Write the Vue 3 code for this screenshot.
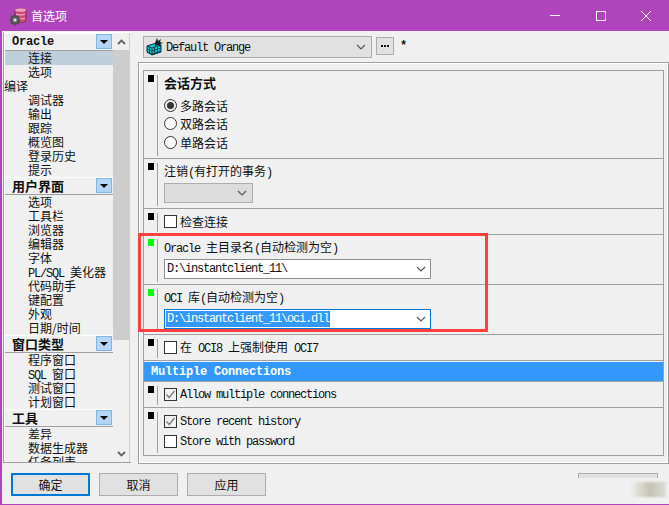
<script setup>
const groups = [
  { title: 'Oracle', mono: true, items: [
    { t: '连接', sel: true }, { t: '选项' }, { t: '编译', flush: true }, { t: '调试器' }, { t: '输出' },
    { t: '跟踪' }, { t: '概览图' }, { t: '登录历史' }, { t: '提示' } ] },
  { title: '用户界面', items: [
    { t: '选项' }, { t: '工具栏' }, { t: '浏览器' }, { t: '编辑器' }, { t: '字体' },
    { lat: 'PL/SQL ', t: '美化器' }, { t: '代码助手' }, { t: '键配置' }, { t: '外观' }, { t: '日期/时间' } ] },
  { title: '窗口类型', items: [
    { t: '程序窗口' }, { lat: 'SQL ', t: '窗口' }, { t: '测试窗口' }, { t: '计划窗口' } ] },
  { title: '工具', items: [ { t: '差异' }, { t: '数据生成器' }, { t: '任务列表' } ] }
]
const radios = [
  { t: '多路会话', on: true }, { t: '双路会话' }, { t: '单路会话' }
]
</script>

<template>
  <div class="win">
    <header class="title">
      <svg class="appicon" width="18" height="19" viewBox="0 0 18 19">
        <path d="M6 3c0-2 11-2 11 0v11c0 2-11 2-11 0z" fill="#d04a78" stroke="#7a2450" stroke-width=".8"/>
        <ellipse cx="11.5" cy="3" rx="5.5" ry="1.8" fill="#f0a0c0"/>
        <path d="M7 7c2 1.4 7 1.4 9 0M7 11c2 1.4 7 1.4 9 0" fill="none" stroke="#f5c0d8"/>
        <circle cx="6" cy="13" r="4.2" fill="#6a6a6a" stroke="#333" stroke-width="1"/>
        <path d="M6 7.4v11.2M.4 13h11.2M2 9l8 8M10 9l-8 8" stroke="#555" stroke-width="1.6"/>
        <circle cx="6" cy="13" r="1.7" fill="#ddd"/>
      </svg>
      <span class="title-text">首选项</span>
      <div class="controls">
        <svg width="12" height="12" viewBox="0 0 12 12"><path d="M1 5.500h10" stroke="#fff"/></svg>
        <svg width="12" height="12" viewBox="0 0 12 12"><rect x="1.500" y="1.500" width="9" height="9" fill="none" stroke="#fff"/></svg>
        <svg width="12" height="12" viewBox="0 0 12 12"><path d="M1 1l10 10M11 1L1 11" stroke="#fff"/></svg>
      </div>
    </header>

    <div class="body">
      <aside class="side">
        <div class="tree">
          <section v-for="g in groups" :key="g.title">
            <div class="group">
              <span :class="g.mono ? 'gmono' : 'gcjk'">{{ g.title }}</span>
              <span class="gbtn"><i class="tri"></i></span>
            </div>
            <div
              v-for="it in g.items"
              :key="it.t"
              class="item"
              :class="{ sel: it.sel, flush: it.flush }"
            ><span v-if="it.lat" class="lat">{{ it.lat }}</span>{{ it.t }}</div>
          </section>
        </div>
        <div class="scroll">
          <div class="sarrow">
            <svg width="9" height="6" viewBox="0 0 9 6"><path d="M1 5l3.500-3.500L8 5" fill="none" stroke="#606060" stroke-width="1.800"/></svg>
          </div>
          <div class="thumb"></div>
          <div class="strack"></div>
          <div class="sarrow">
            <svg width="9" height="6" viewBox="0 0 9 6"><path d="M1 1l3.500 3.500L8 1" fill="none" stroke="#606060" stroke-width="1.800"/></svg>
          </div>
        </div>
      </aside>

      <main class="main">
        <div class="toolbar">
          <div class="combo">
            <svg width="18" height="18" viewBox="0 0 18 18">
              <path d="M1 8l9-3 5 2v7l-9 3-5-3z" fill="#14c4cc" stroke="#0b3040"/>
              <path d="M6 10v7M1 8l5 2 9-3M3.500 9v7M8.500 9v7M11.500 8v7M1 11l5 2 9-3M1 14l5 2 9-3" fill="none" stroke="#0b3040" stroke-width=".8"/>
              <path d="M11 0l1 3 3-2-1 3 3 1-3 1 1 3-4-2-2 2V5z" fill="#12202e"/>
            </svg>
            <span class="lat combo-text">Default Orange</span>
            <svg class="chev" width="10" height="6" viewBox="0 0 10 6"><path d="M1 1l4 4 4-4" fill="none" stroke="#555" stroke-width="1.100"/></svg>
          </div>
          <div class="dots"><i></i><i></i><i></i></div>
          <span class="star lat">*</span>
        </div>

        <div class="frame">
          <div class="panel">
            <div class="sec h88">
              <div class="mark"><i></i></div>
              <div class="content">
                <div class="heading">会话方式</div>
                <div class="radios">
                  <label v-for="r in radios" :key="r.t" class="radio">
                    <span class="rbox" :class="{ on: r.on }"></span>{{ r.t }}
                  </label>
                </div>
              </div>
            </div>

            <div class="sec h50">
              <div class="mark"><i></i></div>
              <div class="content">
                <div class="label">注销<span class="lat">(</span>有打开的事务<span class="lat">)</span></div>
                <div class="select">
                  <svg class="chev" width="10" height="6" viewBox="0 0 10 6"><path d="M1 1l4 4 4-4" fill="none" stroke="#555" stroke-width="1.100"/></svg>
                </div>
              </div>
            </div>

            <div class="sec h26">
              <div class="mark"><i></i></div>
              <div class="content row">
                <span class="cbox"></span>检查连接
              </div>
            </div>

            <div class="sec h50">
              <div class="mark green"><i></i></div>
              <div class="content">
                <div class="label"><span class="lat">Oracle </span>主目录名<span class="lat">(</span>自动检测为空<span class="lat">)</span></div>
                <div class="input">
                  <span class="lat value">D:\instantclient_11\</span>
                  <svg class="chev" width="10" height="6" viewBox="0 0 10 6"><path d="M1 1l4 4 4-4" fill="none" stroke="#555" stroke-width="1.100"/></svg>
                </div>
              </div>
            </div>

            <div class="sec h50">
              <div class="mark green"><i></i></div>
              <div class="content">
                <div class="label"><span class="lat">OCI </span>库<span class="lat">(</span>自动检测为空<span class="lat">)</span></div>
                <div class="input focus">
                  <span class="lat value selected">D:\instantclient_11\oci.dll</span>
                  <svg class="chev" width="10" height="6" viewBox="0 0 10 6"><path d="M1 1l4 4 4-4" fill="none" stroke="#555" stroke-width="1.100"/></svg>
                </div>
              </div>
            </div>

            <div class="sec h26">
              <div class="mark"><i></i></div>
              <div class="content row">
                <span class="cbox"></span><span class="mixed">在<span class="lat"> OCI8 </span>上强制使用<span class="lat"> OCI7</span></span>
              </div>
            </div>

            <div class="band">Multiple Connections</div>

            <div class="sec h26">
              <div class="mark"><i></i></div>
              <div class="content row">
                <span class="cbox">
                  <svg width="11" height="11" viewBox="0 0 11 11"><path d="M1.500 5.500l2.700 3L9.500 2" fill="none" stroke="#777" stroke-width="1.200"/></svg>
                </span><span class="lat low">Allow multiple connections</span>
              </div>
            </div>

            <div class="sec last">
              <div class="mark"><i></i></div>
              <div class="content stack">
                <div class="srow">
                  <span class="cbox">
                    <svg width="11" height="11" viewBox="0 0 11 11"><path d="M1.500 5.500l2.700 3L9.500 2" fill="none" stroke="#777" stroke-width="1.200"/></svg>
                  </span><span class="lat low">Store recent history</span>
                </div>
                <div class="srow">
                  <span class="cbox"></span><span class="lat low">Store with password</span>
                </div>
              </div>
            </div>
          </div>
          <div class="redbox"></div>
        </div>
      </main>
    </div>

    <footer class="foot">
      <button class="btn primary">确定</button>
      <button class="btn">取消</button>
      <button class="btn">应用</button>
      <div class="btn-cut"></div>
      <div class="smudge"></div>
    </footer>
  </div>
</template>

<style>
html, body { margin: 0; background: #f0f0f0; }
</style>

<style scoped>
.win {
  position: relative;
  width: 669px;
  height: 505px;
  box-sizing: border-box;
  display: flex;
  flex-direction: column;
  background: #f0f0f0;
  border-left: 2px solid #b044bc;
  border-bottom: 1px solid #b044bc;
  font-family: "Noto Sans CJK SC", "Liberation Sans", sans-serif;
  font-size: 12px;
  color: #111;
  overflow: hidden;
}
.lat {
  font-family: "Liberation Mono", monospace;
  font-size: 12px;
  letter-spacing: -1.2px;
  white-space: pre;
}
.low { padding-top: 2px; }
.title {
  height: 31px;
  flex: none;
  margin-left: -2px;
  display: flex;
  align-items: center;
  background: #b044bc;
  color: #fff;
  padding-left: 9px;
}
.appicon { margin-top: 1px; }
.title-text { margin-left: 4px; font-size: 12px; }
.controls {
  margin-left: auto;
  width: 120px;
  padding-right: 17px;
  display: flex;
  justify-content: space-between;
  box-sizing: border-box;
}
.body {
  flex: none;
  height: 433px;
  display: flex;
  padding-left: 1px;
}
.side {
  width: 128px;
  height: 431px;
  margin-top: 1px;
  box-sizing: border-box;
  display: flex;
  flex: none;
  background: #f0f0f0;
  border-left: 1px solid #a0a0a0;
  border-top: 1px solid #fff;
  border-bottom: 1px solid #a0a0a0;
  box-shadow: inset 1px 0 #fff;
}
.tree {
  width: 109px;
  box-sizing: border-box;
  padding-left: 1px;
  height: 100%;
  overflow: hidden;
  flex: none;
}
.group {
  height: 18px;
  box-sizing: border-box;
  display: flex;
  align-items: center;
  justify-content: space-between;
  padding: 0 1px 1px 7px;
  background: #f0f0f0;
  border-top: 1px solid #fff;
  border-bottom: 1px solid #a0a0a0;
}
.gmono {
  font-family: "Liberation Mono", monospace;
  font-weight: 700;
  font-size: 12px;
  letter-spacing: -0.2px;
}
.gcjk { font-weight: 700; font-size: 13px; line-height: 16px; }
.gbtn {
  width: 16px;
  height: 15px;
  box-sizing: border-box;
  display: flex;
  align-items: center;
  justify-content: center;
  background: #b5d6f6;
  border: 1px solid #7fb6ec;
}
.tri {
  width: 0;
  height: 0;
  border: 4px solid transparent;
  border-top: 4px solid #000;
  border-bottom: 0;
}
.item {
  height: 14px;
  line-height: 14px;
  padding-left: 23px;
  white-space: nowrap;
}
.item.flush { padding-left: 0; margin-left: -1px; }
.item.sel { background: #bfcfdc; }
.scroll {
  width: 17px;
  box-sizing: border-box;
  display: flex;
  flex-direction: column;
  flex: none;
  border-right: 1px solid #d0d0d0;
}
.sarrow {
  height: 17px;
  display: flex;
  align-items: center;
  justify-content: center;
  flex: none;
}
.thumb { height: 290px; background: #cdcdcd; flex: none; }
.strack { flex: 1; }
.main {
  flex: 1;
  min-width: 0;
  margin-left: 7px;
  display: flex;
  flex-direction: column;
}
.toolbar {
  height: 31px;
  flex: none;
  display: flex;
  align-items: flex-start;
  padding: 5px 0 0 5px;
  box-sizing: border-box;
}
.combo {
  width: 229px;
  height: 22px;
  box-sizing: border-box;
  display: flex;
  align-items: center;
  background: #e1e1e1;
  border: 1px solid #adadad;
  padding-left: 2px;
}
.combo-text { margin-left: 2px; padding-top: 1px; }
.chev { margin-left: auto; margin-right: 5px; flex: none; }
.dots {
  width: 18px;
  height: 18px;
  margin: 1px 0 0 4px;
  box-sizing: border-box;
  display: flex;
  align-items: center;
  justify-content: center;
  gap: 1px;
  background: #e1e1e1;
  border: 1px solid #adadad;
}
.dots i { width: 2px; height: 2px; background: #111; }
.star { margin: 3px 0 0 6px; font-size: 12px; font-weight: 700; }
.frame {
  position: relative;
  height: 402px;
  box-sizing: border-box;
  padding: 7px 4px;
  border: 1px solid #a0a0a0;
  box-shadow: inset 0 0 0 1px #fff;
}
.panel {
  height: 386px;
  box-sizing: border-box;
  border: 1px solid #a0a0a0;
  border-bottom: 0;
}
.sec {
  display: flex;
  box-sizing: border-box;
  border-bottom: 1px solid #a0a0a0;
}
.h88 { height: 88px; }
.h50 { height: 50px; }
.h26 { height: 26px; }
.last { height: 48px; }
.mark {
  width: 14px;
  box-sizing: border-box;
  flex: none;
  margin: 4px 0 2px 0;
  padding-left: 4px;
  border-right: 1px solid #a0a0a0;
}
.mark i {
  display: block;
  width: 6px;
  height: 7px;
  background: #000;
}
.mark.green i { background: #00ff00; }
.content { flex: 1; padding-left: 6px; min-width: 0; }
.row, .srow { display: flex; align-items: center; }
.row { padding-bottom: 1px; }
.mixed { white-space: pre; }
.heading { font-weight: 700; font-size: 13px; line-height: 16px; margin-top: 4px; }
.radios { margin-top: 5px; }
.radio { height: 18.500px; display: flex; align-items: center; }
.rbox {
  width: 13px;
  height: 13px;
  box-sizing: border-box;
  margin-right: 3px;
  border-radius: 50%;
  border: 1px solid #333;
  background: #fff;
  display: flex;
  align-items: center;
  justify-content: center;
}
.rbox.on { background: #efefef; }
.rbox.on::after {
  content: "";
  width: 7px;
  height: 7px;
  border-radius: 50%;
  background: #333;
}
.label { margin-top: 4px; line-height: 16px; white-space: pre; }
.select {
  width: 89px;
  height: 20px;
  margin-top: 2px;
  box-sizing: border-box;
  display: flex;
  align-items: center;
  background: #dcdcdc;
  border: 1px solid #adadad;
}
.input {
  width: 267px;
  height: 20px;
  margin-top: 2px;
  box-sizing: border-box;
  display: flex;
  align-items: center;
  background: #fff;
  border: 1px solid #8f8f8f;
  padding-left: 1px;
}
.input .chev { margin-right: 4px; }
.input.focus { border-color: #0078d7; }
.value { padding-left: 1px; line-height: 16px; }
.selected {
  background: #3399ff;
  color: #fff;
  border-right: 1px solid #c86a1e;
}
.cbox {
  width: 13px;
  height: 13px;
  flex: none;
  box-sizing: border-box;
  margin-right: 3px;
  background: #fff;
  border: 1px solid #333;
  display: flex;
  align-items: center;
  justify-content: center;
}
.cbox:has(svg) { background: #f0f0f0; }
.band {
  margin-top: 1px;
  padding-left: 7px;
  height: 20px;
  box-sizing: border-box;
  background: #3399ff;
  border-bottom: 1px solid #a0a0a0;
  color: #fff;
  font-family: "Liberation Mono", monospace;
  font-weight: 700;
  font-size: 12px;
  letter-spacing: -0.2px;
  line-height: 20px;
}
.stack { padding-top: 3px; }
.srow { height: 20px; }
.redbox {
  position: absolute;
  left: -1px;
  top: 170px;
  width: 350px;
  height: 99px;
  box-sizing: border-box;
  border: 3px solid #ff4040;
  pointer-events: none;
}
.foot {
  flex: 1;
  position: relative;
  display: flex;
  align-items: flex-start;
  gap: 9px;
  padding: 9px 0 0 9px;
}
.btn {
  width: 79px;
  height: 23px;
  padding: 0;
  box-sizing: border-box;
  background: #e1e1e1;
  border: 1px solid #adadad;
  font: inherit;
  color: #111;
}
.btn.primary { border: 2px solid #0078d7; }
.btn-cut {
  width: 80px;
  height: 5px;
  margin-left: auto;
  margin-right: 11px;
  box-sizing: border-box;
  background: #e1e1e1;
  border: 1px solid #adadad;
  border-bottom: 0;
}
.smudge {
  position: absolute;
  right: 3px;
  top: 18px;
  width: 36px;
  height: 15px;
  background: linear-gradient(90deg, rgba(200,200,190,0), #c4c4b4 55%, #dcdcd4 100%);
  filter: blur(1px);
}
</style>
